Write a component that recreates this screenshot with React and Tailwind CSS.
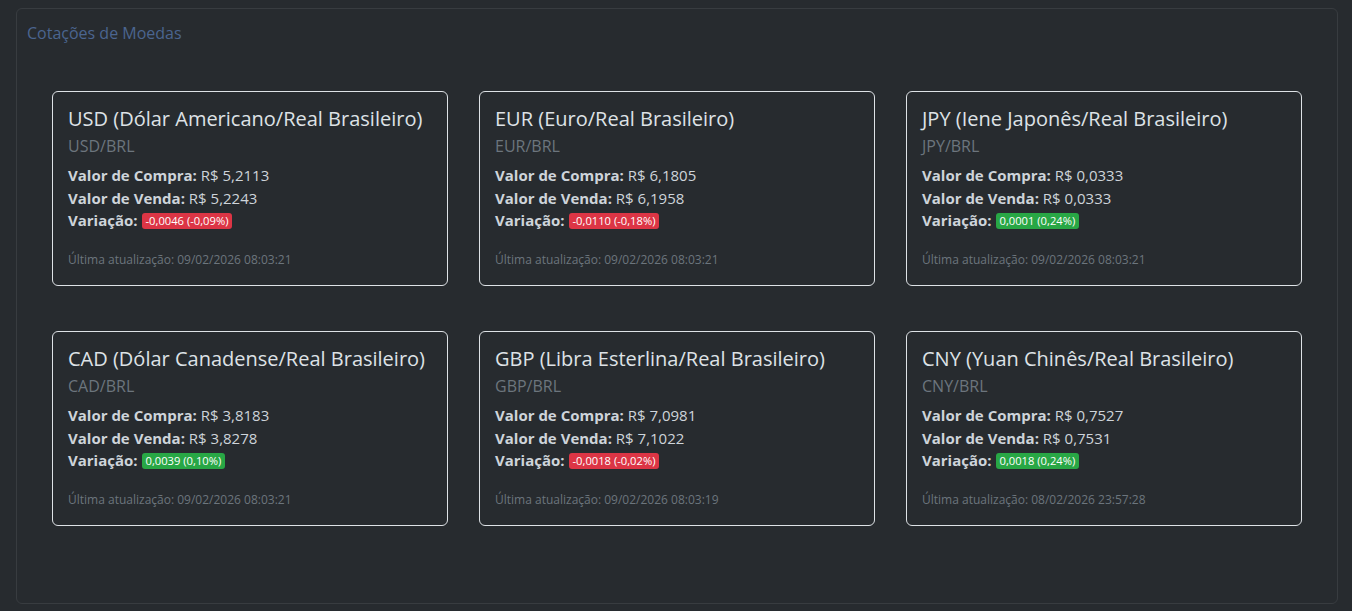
const quotes = [
  { code: 'USD', name: 'Dólar Americano/Real Brasileiro', buy: '5,2113', sell: '5,2243', variation: '-0,0046 (-0,09%)', up: false, updated: '09/02/2026 08:03:21' },
  { code: 'EUR', name: 'Euro/Real Brasileiro', buy: '6,1805', sell: '6,1958', variation: '-0,0110 (-0,18%)', up: false, updated: '09/02/2026 08:03:21' },
  { code: 'JPY', name: 'Iene Japonês/Real Brasileiro', buy: '0,0333', sell: '0,0333', variation: '0,0001 (0,24%)', up: true, updated: '09/02/2026 08:03:21' },
  { code: 'CAD', name: 'Dólar Canadense/Real Brasileiro', buy: '3,8183', sell: '3,8278', variation: '0,0039 (0,10%)', up: true, updated: '09/02/2026 08:03:21' },
  { code: 'GBP', name: 'Libra Esterlina/Real Brasileiro', buy: '7,0981', sell: '7,1022', variation: '-0,0018 (-0,02%)', up: false, updated: '09/02/2026 08:03:19' },
  { code: 'CNY', name: 'Yuan Chinês/Real Brasileiro', buy: '0,7527', sell: '0,7531', variation: '0,0018 (0,24%)', up: true, updated: '08/02/2026 23:57:28' },
];

function QuoteCard({ q }) {
  return (
    <div className="border border-[#dee2e6] rounded-[6px] px-[15px] pt-[12px] h-[195px]">
      <h5 className="text-[20px] leading-[30px] text-[#dee2e6]">{q.code} ({q.name})</h5>
      <h6 className="text-[16px] leading-[24px] text-[#6c757d] mb-[6px]">{q.code}/BRL</h6>
      <p className="text-[15px] leading-[22.5px] text-[#ced4da]">
        <strong className="font-bold">Valor de Compra:</strong> R$ {q.buy}
      </p>
      <p className="text-[15px] leading-[22.5px] text-[#ced4da]">
        <strong className="font-bold">Valor de Venda:</strong> R$ {q.sell}
      </p>
      <p className="text-[15px] leading-[22.5px] text-[#ced4da]">
        <strong className="font-bold">Variação:</strong>{' '}
        <span className={`inline-block px-[4px] rounded-[3px] text-[11.2px] leading-[16px] text-white align-[1px] ${q.up ? 'bg-[#28a745]' : 'bg-[#dc3545]'}`}>
          {q.variation}
        </span>
      </p>
      <p className="text-[12px] leading-[18px] text-[#6c757d] mt-[19px]">Última atualização: {q.updated}</p>
    </div>
  );
}

export default function App() {
  return (
    <div className="min-h-[611px] bg-[#272b2f] p-[8px_14px_7px_16px]" style={{ fontFamily: '"Open Sans", "Noto Sans", sans-serif' }}>
      <div className="border border-[#383c40] rounded-[6px] h-[596px] px-[10px] pt-[12px]">
        <h2 className="text-[16px] leading-[24px] text-[#4b6590]">Cotações de Moedas</h2>
        <div className="grid grid-cols-3 gap-x-[31px] gap-y-[45px] px-[25px] pt-[46px] w-[1300px]">
          {quotes.map((q) => (
            <QuoteCard key={q.code} q={q} />
          ))}
        </div>
      </div>
    </div>
  );
}
